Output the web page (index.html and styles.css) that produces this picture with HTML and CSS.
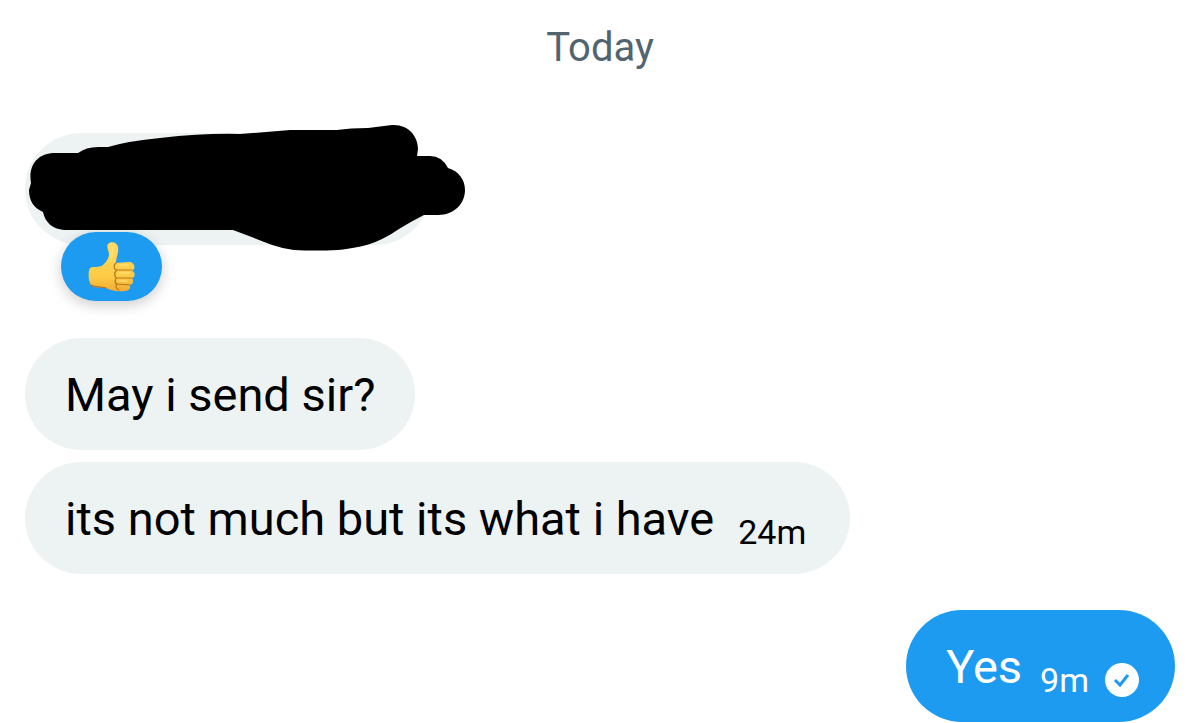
FILE: index.html
```
<!DOCTYPE html>
<html lang="en">

<head>
  <meta charset="UTF-8" />
  <meta name="viewport" content="width=device-width, initial-scale=1.0" />
  <title>Messages</title>
  <link rel="stylesheet" href="styles.css">
</head>

<body>
  <main class="chat">
    <div class="day">Today</div>

    <!-- Hidden message with reaction -->
    <div class="message received hidden-message">
      <svg class="scribble" viewBox="25 123 442 130" role="img" aria-label="Hidden message">
        <path d="M55 153 L78 153 Q86 147 98 147 L108 147 Q128 141 160 138 Q205 133 240 134 L290 130 L337 130 Q350 128 368 128 L392 125 C408 124 418 136 418 149 L417 156 L430 156 Q442 156 448 168 C459 171 465 180 465 190 C465 204 454 215 438 215 L424 215 Q412 221 399 229 C380 242 366 247 338 250 Q315 251 294 250 C272 247 256 238 241 233 L233 230 L64 230 C52 229 45 222 43 212 C34 208 29 201 29 190 L31 183 C28 166 37 153 55 153 Z" />
      </svg>
      <div class="reaction">
        <svg class="thumb" viewBox="0 0 48 50" role="img" aria-label="Thumbs up">
          <defs>
            <linearGradient id="skin" x1="0" y1="0" x2="0" y2="1">
              <stop offset="0" stop-color="#ffdc62" />
              <stop offset="0.7" stop-color="#fdcb45" />
              <stop offset="1" stop-color="#f2ab32" />
            </linearGradient>
          </defs>
          <path fill="url(#skin)" d="M2 26 C5 24 11 26 15 23 C19 19 21 16 21 12 C21 9 18 5 20 2 C23 -1 29 0 30 5 C31 11 28 15 28 21 L41 20 C47 20 48 27 44 29 C48 30 47 36 44 36 C46 39 45 43 42 43 C43 47 40 49 36 49 C28 50 22 48 18 46 C12 44 7 47 3 43 C0 39 0 29 2 26 Z" />
          <path fill="none" stroke="#b9741f" stroke-width="1.2" stroke-linecap="round" d="M28 21 C25 23 26 28 29 28 L44 28 M29 28 C26 30 26 35 29 36 L44 36 M29 36 C26 37 27 42 29 42 L42 43 M29 42 C27 44 28 47 31 48 M3 43 C8 46 12 44 18 46" />
          <path fill="none" stroke="#ffe58b" stroke-width="1" stroke-linecap="round" d="M31 23 L40 23 M31 31 L41 31 M31 39 L39 39 M24 4 C24 10 25 14 22 19" />
        </svg>
      </div>
    </div>

    <div class="message received">
      <span class="text">May i send sir?</span>
    </div>

    <div class="message received">
      <span class="text">its not much but its what i have</span>
      <span class="time">24m</span>
    </div>

    <div class="message sent">
      <span class="text">Yes</span>
      <span class="time">9m</span>
      <svg class="check" viewBox="0 0 34 34" role="img" aria-label="Sent">
        <circle cx="17" cy="17" r="17" fill="#fff" />
        <path d="M10 17 L15 22 L23 12" fill="none" stroke="#1d9bf0" stroke-width="3" />
      </svg>
    </div>
  </main>
</body>

</html>
```

FILE: styles.css
```
body {
  margin: 0;
  background-color: #fff;
  font-family: Roboto, sans-serif;
  color: #0f1419;
}

.chat {
  display: flex;
  flex-direction: column;
  align-items: flex-start;
  gap: 12px;
  padding: 24px 25px 0;
}

.day {
  align-self: center;
  margin-bottom: 49px;
  font-size: 40px;
  line-height: 48px;
  color: #536471;
}

.message {
  display: flex;
  align-items: center;
  box-sizing: border-box;
  height: 112px;
  padding: 2px 40px 0;
  border-radius: 56px;
  white-space: nowrap;
}

.received {
  background-color: #edf3f3;
  color: #000;
}

.sent {
  align-self: flex-end;
  margin-top: 24px;
  padding-right: 36px;
  background-color: #1d9bf0;
  color: #fff;
}

.text {
  font-size: 47px;
  line-height: 56px;
}

.time {
  margin: 26px 4px 0 24px;
  font-size: 34px;
  line-height: 40px;
}

.sent .time {
  margin-right: 0;
  margin-left: 18px;
}

.check {
  width: 34px;
  height: 34px;
  margin: 26px 0 0 16px;
}

.hidden-message {
  position: relative;
  width: 406px;
  margin-bottom: 81px;
}

/* marker strokes run past the edges of the bubble */
.scribble {
  position: absolute;
  top: -10px;
  left: 0;
  width: 442px;
  height: 130px;
}

.reaction {
  position: absolute;
  top: 99px;
  left: 36px;
  display: flex;
  align-items: center;
  justify-content: center;
  width: 101px;
  height: 69px;
  border-radius: 35px;
  background-color: #1d9bf0;
  box-shadow: 0 4px 14px rgba(0, 0, 0, 0.2);
}

.thumb {
  width: 48px;
  height: 50px;
}
```
